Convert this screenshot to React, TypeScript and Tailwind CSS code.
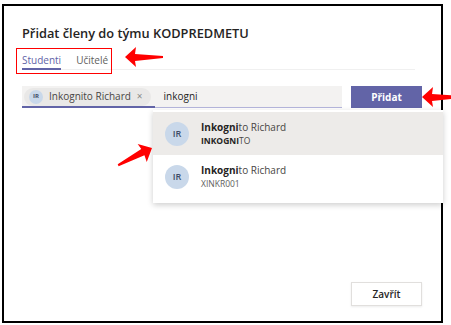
import React from "react"

const font = { fontFamily: '"Open Sans", "Noto Sans", sans-serif' }

function Arrow({ className }: { className: string }) {
  // red annotation arrow, tip at left
  return (
    <svg className={className} width="40" height="22" viewBox="0 0 40 22">
      <path d="M1 11 L12 1 L11 8 L39 10 L39 12 L11 15 L12 21 Z" fill="#ff0000" />
    </svg>
  )
}

function Avatar({ size }: { size: "sm" | "md" }) {
  return size === "sm" ? (
    <div className="flex h-[14px] w-[14px] items-center justify-center rounded-full bg-[#c9d8ea] text-[6px] font-bold text-[#3d4b66]">IR</div>
  ) : (
    <div className="flex h-[24px] w-[24px] items-center justify-center rounded-full bg-[#c9d8ea] text-[9px] font-semibold text-[#3d4b66]">IR</div>
  )
}

export default function App() {
  return (
    <div className="relative h-[325px] w-[451px] overflow-hidden bg-white" style={font}>
      <div className="ml-[2px] mt-[4px] flex h-[319px] w-[441px] flex-col border-2 border-black pl-[18px] pr-[19px] pt-[17px] pb-[15px] relative">
        <h1 className="text-[12.8px] leading-[20px] font-semibold text-[#252423]">Přidat členy do týmu KODPREDMETU</h1>

        <div className="mt-[10px] flex gap-[15px] border-b border-[#f0f0f0] mr-[7px]">
          <div className="-mb-px border-b-2 border-[#6264a7] text-[10px] leading-[14px] pb-[1px] text-[#6264a7]">Studenti</div>
          <div className="text-[10px] leading-[14px] text-[#605e5c]">Učitelé</div>
        </div>

        <div className="mt-[16px] flex gap-[9px]">
          <div className="relative flex h-[22px] flex-1 items-center bg-[#f3f2f1] border-b border-[#b5b6dc]">
            <div className="ml-[2px] flex h-[18px] items-center gap-[6px] rounded-full bg-[#e9e8e7] pl-[5px] pr-[8px]">
              <Avatar size="sm" />
              <span className="text-[10px] text-[#484644]">Inkognito Richard</span>
              <span className="text-[10px] text-[#8a8886]">×</span>
            </div>
            <span className="ml-[13px] text-[10px] text-[#252423]">inkogni</span>
            <div className="absolute -bottom-px left-0 h-[2px] w-[133px] bg-[#6264a7]" />
          </div>
          <button className="h-[22px] w-[71px] bg-[#6264a7] text-[10px] font-bold text-white">Přidat</button>
        </div>

        <div className="mt-auto flex justify-end">
          <button className="h-[24px] w-[71px] border border-[#e1dfdd] bg-white text-[10px] font-semibold text-[#252423] shadow-[0_1px_2px_rgba(0,0,0,0.08)]">Zavřít</button>
        </div>

        {/* suggestion menu */}
        <div className="absolute left-[149px] top-[104px] w-[290px] bg-white pt-[2px] pb-[4px] shadow-[0_2px_6px_rgba(0,0,0,0.2)]">
          <div className="flex h-[43px] items-center gap-[12px] bg-[#edebe9] pl-[12px]">
            <Avatar size="md" />
            <div className="flex flex-col leading-[14px]">
              <span className="text-[10px] text-[#484644]"><b className="font-bold text-[#252423]">Inkogni</b>to Richard</span>
              <span className="text-[8.5px] text-[#484644]"><b className="font-bold text-[#252423]">INKOGNI</b>TO</span>
            </div>
          </div>
          <div className="flex h-[44px] items-center gap-[12px] pl-[12px]">
            <Avatar size="md" />
            <div className="flex flex-col leading-[14px]">
              <span className="text-[10px] text-[#484644]"><b className="font-bold text-[#252423]">Inkogni</b>to Richard</span>
              <span className="text-[8.5px] text-[#605e5c]">XINKR001</span>
            </div>
          </div>
        </div>
      </div>

      {/* annotations */}
      <div className="absolute left-[16px] top-[48px] h-[26px] w-[96px] border-[1.5px] border-[#ff0000]" />
      <Arrow className="absolute left-[124px] top-[46px]" />
      <Arrow className="absolute left-[421px] top-[86px]" />
      <Arrow className="absolute left-[151px] top-[137px] origin-[1px_11px] rotate-[153deg]" />
    </div>
  )
}
